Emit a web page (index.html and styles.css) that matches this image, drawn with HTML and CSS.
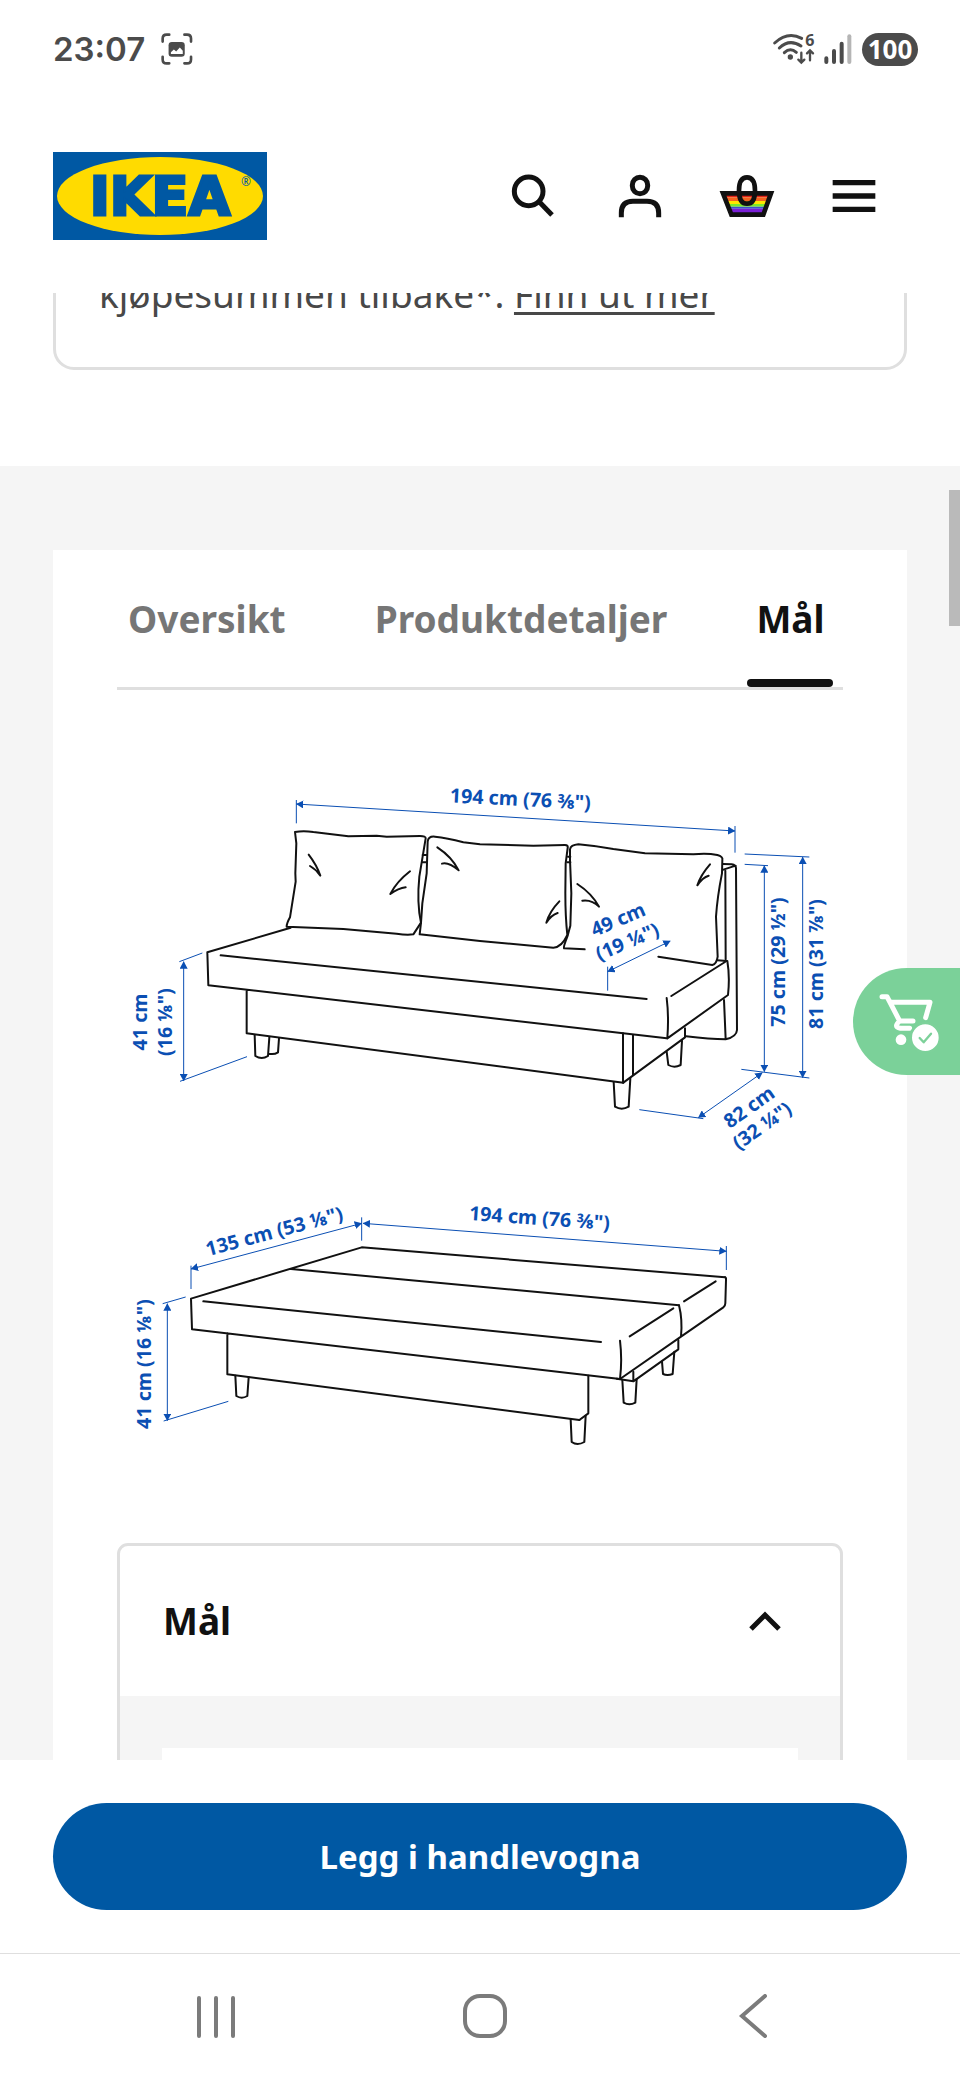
FILE: index.html
```html
<!DOCTYPE html>
<html lang="no">
<head>
<meta charset="utf-8">
<meta name="viewport" content="width=device-width, initial-scale=1">
<title>IKEA – Mål</title>
<link rel="stylesheet" href="styles.css">
</head>
<body class="screen">
  <div class="status">
    <div class="status-side">
      <span class="clock">23:07</span>
      <svg class="ic-shot" viewBox="484 99 97 97" aria-hidden="true">
        <g fill="none" stroke="#4b4b4b" stroke-width="8" stroke-linecap="round">
          <path d="M489 125V116Q489 104 501 104H509M555 104H563Q575 104 575 116V125M575 171V179Q575 191 563 191H555M509 191H501Q489 191 489 179V171"/>
        </g>
        <rect x="507" y="126" width="49" height="45" rx="10" fill="#4b4b4b"/>
        <path d="M514 163V157L523 149L530 155L541 143L550 153V163Z" fill="#fff"/>
      </svg>
    </div>
    <div class="status-side status-right">
      <svg class="ic-wifi" viewBox="876 92 129 108" aria-hidden="true">
        <g fill="none" stroke="#4b4b4b" stroke-width="9" stroke-linecap="round">
          <path d="M881 128Q920 92 962 114M895 143Q925 114 960 137M910 157Q928 140 946 156"/>
          <path stroke-width="7" d="M961 157V186M952 178L961 187L970 178M987 180V151M978 159L987 150L996 159"/>
        </g>
        <circle cx="928" cy="170" r="8" fill="#4b4b4b"/>
        <text class="wifi-gen" x="973" y="136">6</text>
      </svg>
      <svg class="ic-signal" viewBox="1030 99 84 93" aria-hidden="true">
        <g stroke="#4b4b4b" stroke-width="12" stroke-linecap="round">
          <path d="M1037 172V183M1060 150V183M1083 128V183"/><path stroke="#b5b5b5" d="M1106 106V183"/>
        </g>
      </svg>
      <span class="battery">100</span>
    </div>
  </div>

  <header class="header">
    <a class="logo" href="#" aria-label="IKEA">
      <svg viewBox="0 0 214 88">
        <rect width="214" height="88" fill="#0058a3"/>
        <ellipse cx="107" cy="44" rx="103" ry="39" fill="#ffdb00"/>
        <text class="logo-word" x="107" y="63">IKEA</text>
        <text class="logo-reg" x="193" y="34">®</text>
      </svg>
    </a>
    <nav class="tools">
      <button class="tool" type="button" aria-label="Søk"><svg viewBox="64 492 192 192"><g fill="none" stroke="#111" stroke-width="15"><circle cx="147" cy="574" r="43"/><path d="M177 604L217 645"/></g></svg></button>
      <button class="tool" type="button" aria-label="Profil"><svg viewBox="384 492 192 192"><g fill="none" stroke="#111" stroke-width="15"><rect x="457" y="532" width="46" height="49" rx="23"/><path d="M424 652V639Q424 604 459 604H501Q536 604 536 639V652"/></g></svg></button>
      <button class="tool" type="button" aria-label="Handlekurv"><svg viewBox="704 492 192 192"><path fill="#e22016" d="M733 580H867V592H733Z"/><path fill="#f2621f" d="M737 592H863V603H737Z"/><path fill="#ffe600" d="M741 603H859V612H741Z"/><path fill="#7bea2b" d="M744 612H856V620H744Z"/><path fill="#3a55c8" d="M747 620H853V626H747Z"/><path fill="#7a1fd6" d="M749 626H851V641H749Z"/><g fill="none" stroke="#111" stroke-width="14"><path d="M728 580H872L849 644H753Z"/><path d="M800 532Q824 532 824 572Q824 611 800 611Q776 611 776 572Q776 532 800 532Z"/></g></svg></button>
      <button class="tool" type="button" aria-label="Meny"><svg viewBox="1024 492 192 192"><path stroke="#111" stroke-width="16" d="M1056 548H1184M1056 588H1184M1056 628H1184"/></svg></button>
    </nav>
  </header>

  <main class="content">
    <section class="notice-wrap">
      <p class="notice">kjøpesummen tilbake*. <a class="notice-link" href="#">Finn ut mer</a></p>
    </section>
    <section class="product">
      <div class="card">
        <div class="tabs" role="tablist">
          <button class="tab" role="tab" type="button">Oversikt</button>
          <button class="tab" role="tab" type="button">Produktdetaljer</button>
          <button class="tab tab-active" role="tab" type="button" aria-selected="true">Mål</button>
        </div>

        <svg class="diagram" viewBox="-9 0 2178 2160" role="img" aria-label="Mål på sovesofaen">
          <defs>
            <marker id="arrow" markerUnits="userSpaceOnUse" markerWidth="22" markerHeight="24" refX="21" refY="12" orient="auto-start-reverse"><path d="M0 0L22 12L0 24Z" fill="#0b4fb3"/></marker>
          </defs>
          <!-- Sofa, upright -->
          <g class="ink">
            <path d="M525 216Q550 211 580 216L685 229L770 227L800 230L900 228Q918 228 917 235L912 265L898 350Q890 430 903 488L880 523Q860 526 830 521L670 507L500 500Q500 490 510 472L527 365L526 340L529 250Z"/>
            <path d="M566 284Q590 315 601 347Q588 328 570 318M870 334Q830 365 811 402Q835 385 857 382M952 262Q995 290 1016 331Q985 305 966 311"/>
            <path d="M908 285H919M908 307H919"/>
            <path d="M923 245Q925 228 945 230Q980 233 1030 247L1080 253L1240 257L1335 255Q1345 255 1343 264L1337 310L1336 400Q1336 470 1342 525Q1325 562 1300 563L1080 543L899 523L903 488L907 430L920 340Z"/>
            <path d="M512 503L262 577L265 676L1640 835M302 586L1580 717M380 690V820L1510 968"/>
            <path d="M404 825L406 888Q425 900 444 888L448 832M477 835L474 877Q462 885 446 881"/>
          </g>
          <g class="ink" transform="translate(1080)">
            <path d="M314 568L252 565Q250 560 262 530L271 497L274 400L270 300V268Q272 255 295 253Q350 258 400 267L495 280L640 283Q680 278 712 285Q730 290 727 300L726 340Q712 410 708 470L713 590Q710 612 697 615L535 590"/>
            <path d="M690 313Q662 345 652 376Q668 352 686 347M292 372Q335 400 357 440Q335 418 307 422M238 424Q208 455 199 488Q214 465 233 459M264 290H271M262 307H271"/>
            <path d="M729 312L755 313Q768 315 768 325L771 810Q770 830 737 838Q690 838 618 829M730 329L767 317M736 332L737 598M732 720L737 838"/>
            <path d="M712 601L742 603Q750 650 744 705L562 835Q567 770 560 714M574 708L735 606"/>
            <path d="M429 820V968M459 825V945M430 968L615 832V805"/>
            <path d="M401 966L405 1040Q425 1052 446 1040L451 955M560 875L565 915Q583 925 602 915L606 842"/>
          </g>
          <g class="dim">
            <path d="M529 120V190M1845 198V278M178 605L247 579M180 964L381 890"/>
            <path class="arrows" d="M529 132L1845 213"/><path class="arrows" d="M191 605V963"/>
          </g>
          <g class="dim" transform="translate(1080)">
            <path d="M794 282L988 291M794 313L864 317M784 928L988 954M478 1049L670 1076M383 620V692"/>
            <path class="arrows" d="M968 291V953"/><path class="arrows" d="M853 317V935"/><path class="arrows" d="M655 1073L847 938"/><path class="arrows" d="M383 635L571 543"/>
          </g>
          <!-- Sofa, folded out -->
          <g class="ink" transform="translate(0 1260)">
            <path d="M1815 292L725 202L213 356L216 448L1500 597M513 267L1677 376M250 364L1443 486M322 460V583L1378 720"/>
            <path d="M346 587L349 648Q365 658 382 648L386 592"/>
          </g>
          <g class="ink" transform="translate(1020 1260)">
            <path d="M795 292Q799 293 798 300L796 370Q796 378 790 382L663 470M672 364L767 304M657 376Q668 420 663 470L480 597Q487 540 480 482M509 469L640 385"/>
            <path d="M385 587V700L358 720M655 480V508L520 604L470 596M520 575V602"/>
            <path d="M487 600L491 668Q508 678 526 668L530 597M606 545L609 582Q622 588 638 582L643 515M332 718L335 786Q352 798 373 786L377 707"/>
          </g>
          <g class="dim" transform="translate(0 1260)">
            <path d="M213 257V327M725 112V182M1819 198V270M128 371L197 351M131 723L325 664"/>
            <path class="arrows" d="M213 267L725 130"/><path class="arrows" d="M729 130L1819 214"/><path class="arrows" d="M142 371V722"/>
          </g>
          <g class="dim-label">
            <text transform="translate(1200 138) rotate(3)">194 cm (76 ⅜")</text>
            <text transform="translate(1502 498) rotate(-23)">49 cm</text>
            <text transform="translate(1530 564) rotate(-23)">(19 ¼")</text>
            <text transform="translate(1995 606) rotate(-90)">75 cm (29 ½")</text>
            <text transform="translate(2109 612) rotate(-90)">81 cm (31 ⅞")</text>
            <text transform="translate(1899 1058) rotate(-35)">82 cm</text>
            <text transform="translate(1938 1114) rotate(-35)">(32 ¼")</text>
            <text transform="translate(81 786) rotate(-90)">41 cm</text>
            <text transform="translate(156 786) rotate(-90)">(16 ⅛")</text>
            <text transform="translate(468 1434) rotate(-15)">135 cm (53 ⅛")</text>
            <text transform="translate(1257 1395) rotate(4)">194 cm (76 ⅜")</text>
            <text transform="translate(93 1812) rotate(-90)">41 cm (16 ⅛")</text>
          </g>
        </svg>

        <div class="accordion">
          <button class="accordion-head" type="button" aria-expanded="true">
            <span>Mål</span>
            <svg class="ic-chevron" viewBox="0 0 32 20" aria-hidden="true"><path d="M2 18L16 4L30 18" fill="none" stroke="#111" stroke-width="5"/></svg>
          </button>
          <div class="accordion-body"><div class="sheet"></div></div>
        </div>
      </div>
    </section>
  </main>

  <footer class="buybar">
    <button class="buy" type="button">Legg i handlevogna</button>
  </footer>

  <nav class="sysnav">
    <button class="sys" type="button" aria-label="Nylige"><svg viewBox="0 0 44 44"><path d="M5 4V42M22 4V42M39 4V42" stroke="#7b7b7b" stroke-width="4" stroke-linecap="round"/></svg></button>
    <button class="sys" type="button" aria-label="Hjem"><svg viewBox="0 0 44 44"><rect x="2" y="2" width="40" height="40" rx="15" fill="none" stroke="#7b7b7b" stroke-width="4"/></svg></button>
    <button class="sys" type="button" aria-label="Tilbake"><svg viewBox="0 0 44 44"><path d="M33 2L10 22L33 42" fill="none" stroke="#7b7b7b" stroke-width="4" stroke-linecap="round"/></svg></button>
  </nav>

  <div class="scroll-thumb"></div>
  <button class="cart-float" type="button" aria-label="Tilbud">
    <svg viewBox="1195 703 186 180"><g fill="none" stroke="#fff" stroke-width="15" stroke-linecap="round" stroke-linejoin="round"><path d="M1207 717H1222L1260 790H1300M1236 734H1351L1338 780M1260 790Q1240 808 1262 812H1290"/></g><circle cx="1264" cy="846" r="16" fill="#fff"/><circle cx="1337" cy="840" r="44" fill="#fff" stroke="#7dd19a" stroke-width="8"/><path d="M1320 841L1332 854L1354 828" fill="none" stroke="#7dd19a" stroke-width="7" stroke-linecap="round" stroke-linejoin="round"/></svg>
  </button>
</body>
</html>
```
FILE: styles.css
```css
* { box-sizing: border-box; }

button {
  margin: 0;
  padding: 0;
  border: 0;
  background: none;
  color: inherit;
  font: inherit;
}

svg { display: block; }

.screen {
  position: relative;
  display: flex;
  flex-direction: column;
  height: 100vh;
  margin: 0;
  overflow: hidden;
  background: #fff;
  color: #111;
  font-family: "Noto Sans", "Open Sans", sans-serif;
}

/* Status bar */
.status {
  display: flex;
  flex: none;
  justify-content: space-between;
  align-items: center;
  height: 98px;
  padding: 0 42px 0 53px;
  color: #4b4b4b;
}
.status-side { display: flex; align-items: center; gap: 16px; }
.status-right { gap: 10px; }
.clock { font: 600 33px/40px Inter, sans-serif; }
.ic-shot { width: 32px; height: 32px; }
.ic-wifi { width: 43px; height: 36px; margin-right: -2px; overflow: visible; }
.ic-signal { width: 28px; height: 31px; }
.wifi-gen { font: 700 48px "Noto Sans", sans-serif; fill: #4b4b4b; }
.battery {
  width: 56px;
  border-radius: 17px;
  background: #4b4b4b;
  color: #fff;
  font-size: 26px;
  font-weight: 700;
  line-height: 33px;
  text-align: center;
}

/* Site header */
.header {
  display: flex;
  flex: none;
  justify-content: space-between;
  align-items: center;
  height: 195px;
  padding: 0 53px;
}
.logo svg { width: 214px; height: 88px; }
.logo-word {
  font: 700 54px "DejaVu Sans", sans-serif;
  fill: #0058a3;
  stroke: #0058a3;
  stroke-width: 3;
  text-anchor: middle;
}
.logo-reg { font: 400 12px "Noto Sans", sans-serif; fill: #0058a3; text-anchor: middle; }
.tools { display: flex; }
.tool { display: grid; place-items: center; width: 107px; height: 107px; }
.tool svg { width: 64px; height: 64px; }

/* Page content, scrolled under the header */
.content { flex: 1; min-height: 0; overflow: hidden; }
.notice-wrap { padding: 0 53px 96px; }
.notice {
  margin: -73px 0 0;
  padding: 43px 43px 45px;
  border: 3px solid #dfdfdf;
  border-radius: 21px;
  color: #484848;
  font-size: 37px;
  line-height: 56px;
}
.notice-link { color: inherit; text-underline-offset: 4px; text-decoration-thickness: 3px; }
.product { padding: 84px 53px 0; background: #f5f5f5; }
.card { padding: 0 64px 64px; background: #fff; }

.tabs { display: flex; gap: 71px; padding-left: 2px; border-bottom: 3px solid #dfdfdf; }
.tab {
  padding: 44px 9px 35px;
  border-bottom: 8px solid transparent;
  color: #767676;
  font-size: 37px;
  font-weight: 700;
  line-height: 50px;
}
.tab-active {
  position: relative;
  color: #111;
}
.tab-active::after {
  content: "";
  position: absolute;
  right: 0;
  bottom: -8px;
  left: 0;
  height: 8px;
  border-radius: 4px;
  background: #111;
}

/* Dimension drawing */
.diagram { width: 100%; height: auto; margin: 70px 0 63px; }
.ink { fill: none; stroke: #111; stroke-width: 6; stroke-linecap: round; stroke-linejoin: round; }
.dim { fill: none; stroke: #0b4fb3; stroke-width: 3; }
.arrows { marker-start: url(#arrow); marker-end: url(#arrow); }
.dim-label { font: 700 59px "Noto Sans", sans-serif; fill: #0b4fb3; text-anchor: middle; }

/* Accordion */
.accordion { border: 3px solid #dfdfdf; border-radius: 11px; overflow: hidden; }
.accordion-head {
  display: flex;
  justify-content: space-between;
  align-items: center;
  width: 100%;
  padding: 50px 59px 50px 43px;
  font-size: 37px;
  font-weight: 700;
  line-height: 50px;
}
.ic-chevron { width: 32px; height: 20px; }
.accordion-body { padding: 52px 42px 0; background: #f5f5f5; }
.sheet { height: 160px; background: #fff; }

/* Purchase bar */
.buybar { flex: none; padding: 43px 53px; border-bottom: 1px solid #dfdfdf; }
.buy {
  width: 100%;
  border-radius: 54px;
  background: #0058a3;
  color: #fff;
  font-size: 33px;
  font-weight: 700;
  line-height: 107px;
}

/* System navigation */
.sysnav {
  display: flex;
  flex: none;
  justify-content: space-between;
  align-items: center;
  height: 126px;
  padding: 0 184px 3px 194px;
}
.sys svg { width: 44px; height: 44px; }

/* Overlays */
.scroll-thumb {
  position: absolute;
  top: 490px;
  right: 0;
  width: 11px;
  height: 136px;
  background: #bababa;
}
.cart-float {
  position: absolute;
  top: 968px;
  right: 0;
  display: flex;
  align-items: center;
  width: 107px;
  height: 107px;
  padding-left: 25px;
  border-radius: 54px 0 0 54px;
  background: rgba(112, 205, 144, .92);
}
.cart-float svg { width: 62px; height: 60px; }
```
